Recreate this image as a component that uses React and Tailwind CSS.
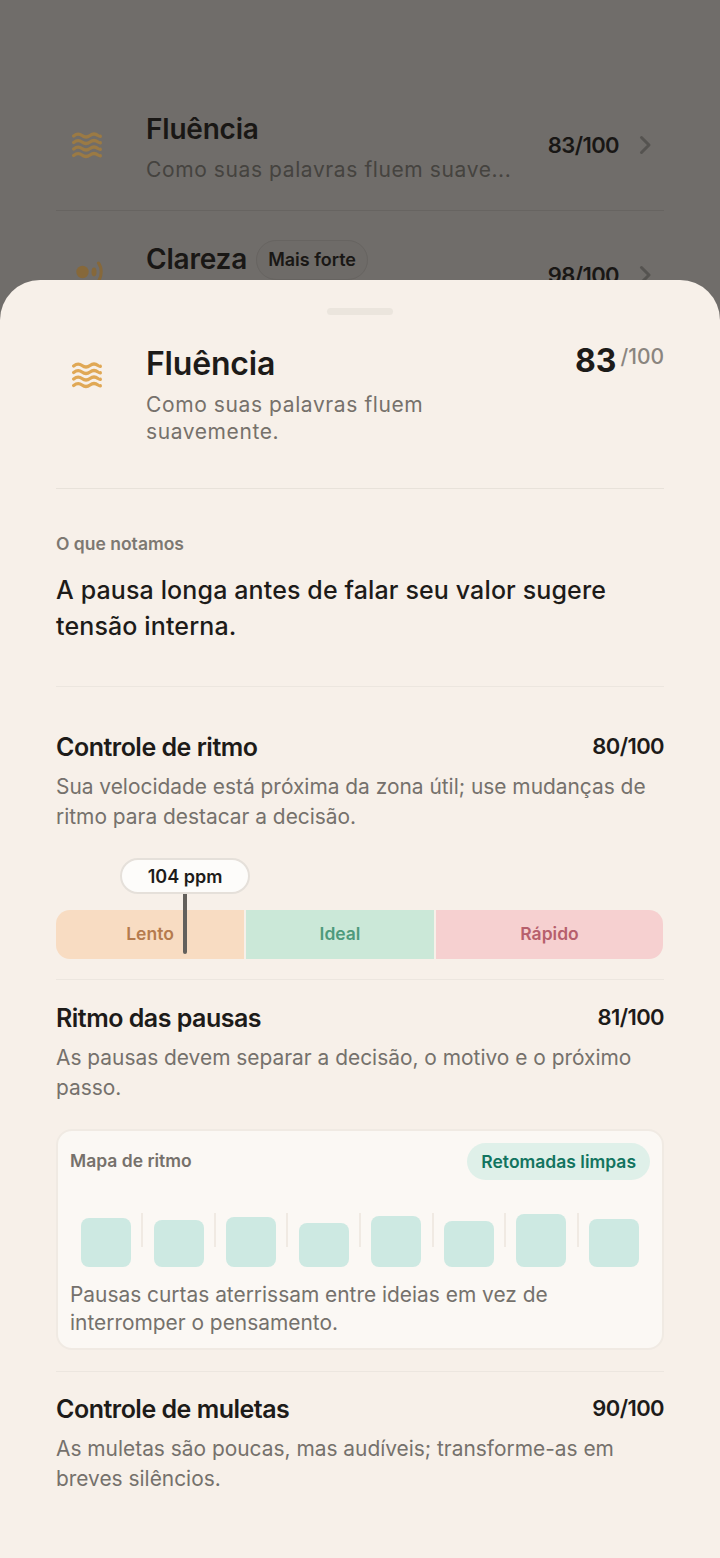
import React from "react";

const wave = (y) => `M1.7 ${y + 0.5} Q6 ${y - 3} 10 ${y} T18 ${y} T26 ${y} Q27.5 ${y + 1} 28.3 ${y + 0.8}`;

const Waves = ({ className }) => (
  <svg className={className} width="30" height="28" viewBox="0 0 30 28" fill="none" stroke="currentColor" strokeWidth="3.3" strokeLinecap="round">
    <path d={wave(4.5)} />
    <path d={wave(11)} />
    <path d={wave(17.5)} />
    <path d={wave(24)} />
  </svg>
);

const Chevron = () => (
  <svg width="14" height="20" viewBox="0 0 14 20" fill="none" stroke="currentColor" strokeWidth="3" strokeLinecap="round" strokeLinejoin="round" className="text-[#555350]">
    <path d="M3.5 2.5 11 10l-7.5 7.5" />
  </svg>
);

const Metric = ({ title, score, desc }) => (
  <>
    <div className="flex items-center justify-between h-[34px]">
      <h3 className="text-[25px] font-semibold tracking-[-0.5px] text-[#1d1b19]">{title}</h3>
      <span className="-mt-[4px] text-[22px] font-semibold tracking-[-0.6px] text-[#1d1b19]">{score}</span>
    </div>
    <p className="mt-[7px] text-[20.9px] leading-[29.5px] text-[#75716c]">{desc}</p>
  </>
);

const bars = [49, 47, 50, 44, 51, 46, 53, 48];

export default function App() {
  return (
    <div className="relative h-[1558px] w-[720px] overflow-hidden bg-[#706d6a] font-['Inter',sans-serif]">
      <div className="h-[280px] overflow-hidden px-[56px]">
        <div className="flex h-[211px] items-center border-b border-[#676461] pt-[80px]">
          <div className="flex w-[90px] shrink-0 items-center">
            <Waves className="ml-[16px] text-[#9b7a44]" />
          </div>
          <div className="min-w-0 flex-1">
            <div className="pt-[6px] text-[28px] leading-[36px] font-semibold tracking-[-0.2px] text-[#191715]">Fluência</div>
            <div className="mt-[8px] text-[21px] leading-[30px] tracking-[0.6px] text-[#45433f]">Como suas palavras fluem suave...</div>
          </div>
          <span className="text-[22px] font-semibold tracking-[-0.6px] text-[#191715]">83/100</span>
          <span className="ml-[19px] mr-[12px]"><Chevron /></span>
        </div>
        <div className="flex pt-[30px]">
          <div className="w-[90px] shrink-0 pt-[20px]">
            <svg width="30" height="22" viewBox="0 0 30 22" fill="none" className="ml-[20px] text-[#86683a]">
              <circle cx="6.5" cy="11" r="6.2" fill="currentColor" />
              <ellipse cx="18" cy="11" rx="2.5" ry="4.4" fill="currentColor" />
              <path d="M22.5 2c3.6 5 3.6 13 0 18" stroke="currentColor" strokeWidth="3" strokeLinecap="round" />
            </svg>
          </div>
          <div className="flex flex-1 items-start">
            <span className="text-[28px] leading-[36px] font-semibold tracking-[-0.2px] text-[#191715]">Clareza</span>
            <span className="ml-[9px] -mt-[1px] rounded-full border border-[#676461] bg-[#6e6b68] px-[11px] py-[6px] text-[18px] leading-[26px] font-semibold text-[#191715]">Mais forte</span>
          </div>
          <span className="pt-[18px] text-[22px] font-semibold tracking-[-0.6px] text-[#191715]">98/100</span>
          <span className="ml-[19px] mr-[12px] pt-[24px]"><Chevron /></span>
        </div>
      </div>

      <div className="h-[1278px] rounded-t-[40px] bg-[#f7f0e9] px-[56px] pt-[28px]">
        <div className="mx-auto h-[7px] w-[66px] rounded-full bg-[#ebe5dd]" />

        <div className="flex border-b border-[#e8e2da] pt-[28px] pb-[43px]">
          <div className="w-[90px] shrink-0 pt-[18px]">
            <Waves className="ml-[16px] text-[#e0a855]" />
          </div>
          <div className="w-[320px]">
            <div className="text-[32px] leading-[42px] font-semibold tracking-[-0.2px] text-[#1d1b19]">Fluência</div>
            <div className="mt-[6px] text-[21px] leading-[27px] tracking-[0.6px] text-[#76716b]">Como suas palavras fluem suavemente.</div>
          </div>
          <div className="ml-auto flex items-start">
            <span className="-mt-[3px] text-[32px] leading-[42px] font-bold text-[#1d1b19]">83</span>
            <span className="ml-[4px] -mt-[3px] text-[21px] leading-[34px] font-medium text-[#8a857f]">/100</span>
          </div>
        </div>

        <div className="border-b border-[#ece6df] pt-[43px] pb-[42px]">
          <div className="text-[17.5px] leading-[24px] font-semibold text-[#7d7872]">O que notamos</div>
          <p className="mt-[16px] text-[25px] leading-[36px] font-medium tracking-[0.13px] text-[#1d1b19]">A pausa longa antes de falar seu valor sugere tensão interna.</p>
        </div>

        <div className="border-b border-[#ece6df] pt-[44px] pb-[20px]">
          <Metric title="Controle de ritmo" score="80/100" desc="Sua velocidade está próxima da zona útil; use mudanças de ritmo para destacar a decisão." />
          <div className="relative mt-[79px] flex h-[49px] w-[607px] gap-[2px] overflow-hidden rounded-[14px] text-[17.5px] font-semibold">
            <div className="flex w-[188px] items-center justify-center bg-[#f8dcc2] text-[#b57b4e]">Lento</div>
            <div className="flex w-[188px] items-center justify-center bg-[#cbe8d8] text-[#4e9a7c]">Ideal</div>
            <div className="flex flex-1 items-center justify-center bg-[#f6d0d0] text-[#b75f6c]">Rápido</div>
          </div>
        </div>

        <div className="border-b border-[#ece6df] pt-[22px] pb-[21px]">
          <Metric title="Ritmo das pausas" score="81/100" desc="As pausas devem separar a decisão, o motivo e o próximo passo." />
          <div className="mt-[27px] rounded-[16px] border-2 border-[#f0eae3] bg-[#fbf8f4] px-[12px] pt-[12px] pb-[11px]">
            <div className="flex items-center justify-between">
              <span className="text-[17.5px] font-semibold text-[#76716b]">Mapa de ritmo</span>
              <span className="rounded-full bg-[#dff0e9] px-[14px] py-[6px] text-[17.5px] leading-[25px] font-semibold text-[#12745f]">Retomadas limpas</span>
            </div>
            <div className="mt-[34px] flex h-[53px] items-end justify-between px-[11px]">
              {bars.map((h, i) => (
                <React.Fragment key={i}>
                  <div className="w-[50px] rounded-[8px] bg-[#cde9e2]" style={{ height: h }} />
                  {i < 7 && <div className="mb-[20px] h-[34px] w-[2px] bg-[#f0eae3]" />}
                </React.Fragment>
              ))}
            </div>
            <p className="mt-[14px] text-[20.9px] leading-[28px] text-[#75716c]">Pausas curtas aterrissam entre ideias em vez de interromper o pensamento.</p>
          </div>
        </div>

        <div className="pt-[21px]">
          <Metric title="Controle de muletas" score="90/100" desc="As muletas são poucas, mas audíveis; transforme-as em breves silêncios." />
        </div>
      </div>

      <div className="absolute top-[858px] left-[120px] flex h-[36px] w-[130px] items-center justify-center rounded-full border-2 border-[#e5e0da] bg-[#fdfcfa] text-[18px] font-semibold text-[#1d1b19]">104 ppm</div>
      <div className="absolute top-[894px] left-[183px] h-[60px] w-[4px] rounded-b-full bg-[#63605c]" />
    </div>
  );
}
